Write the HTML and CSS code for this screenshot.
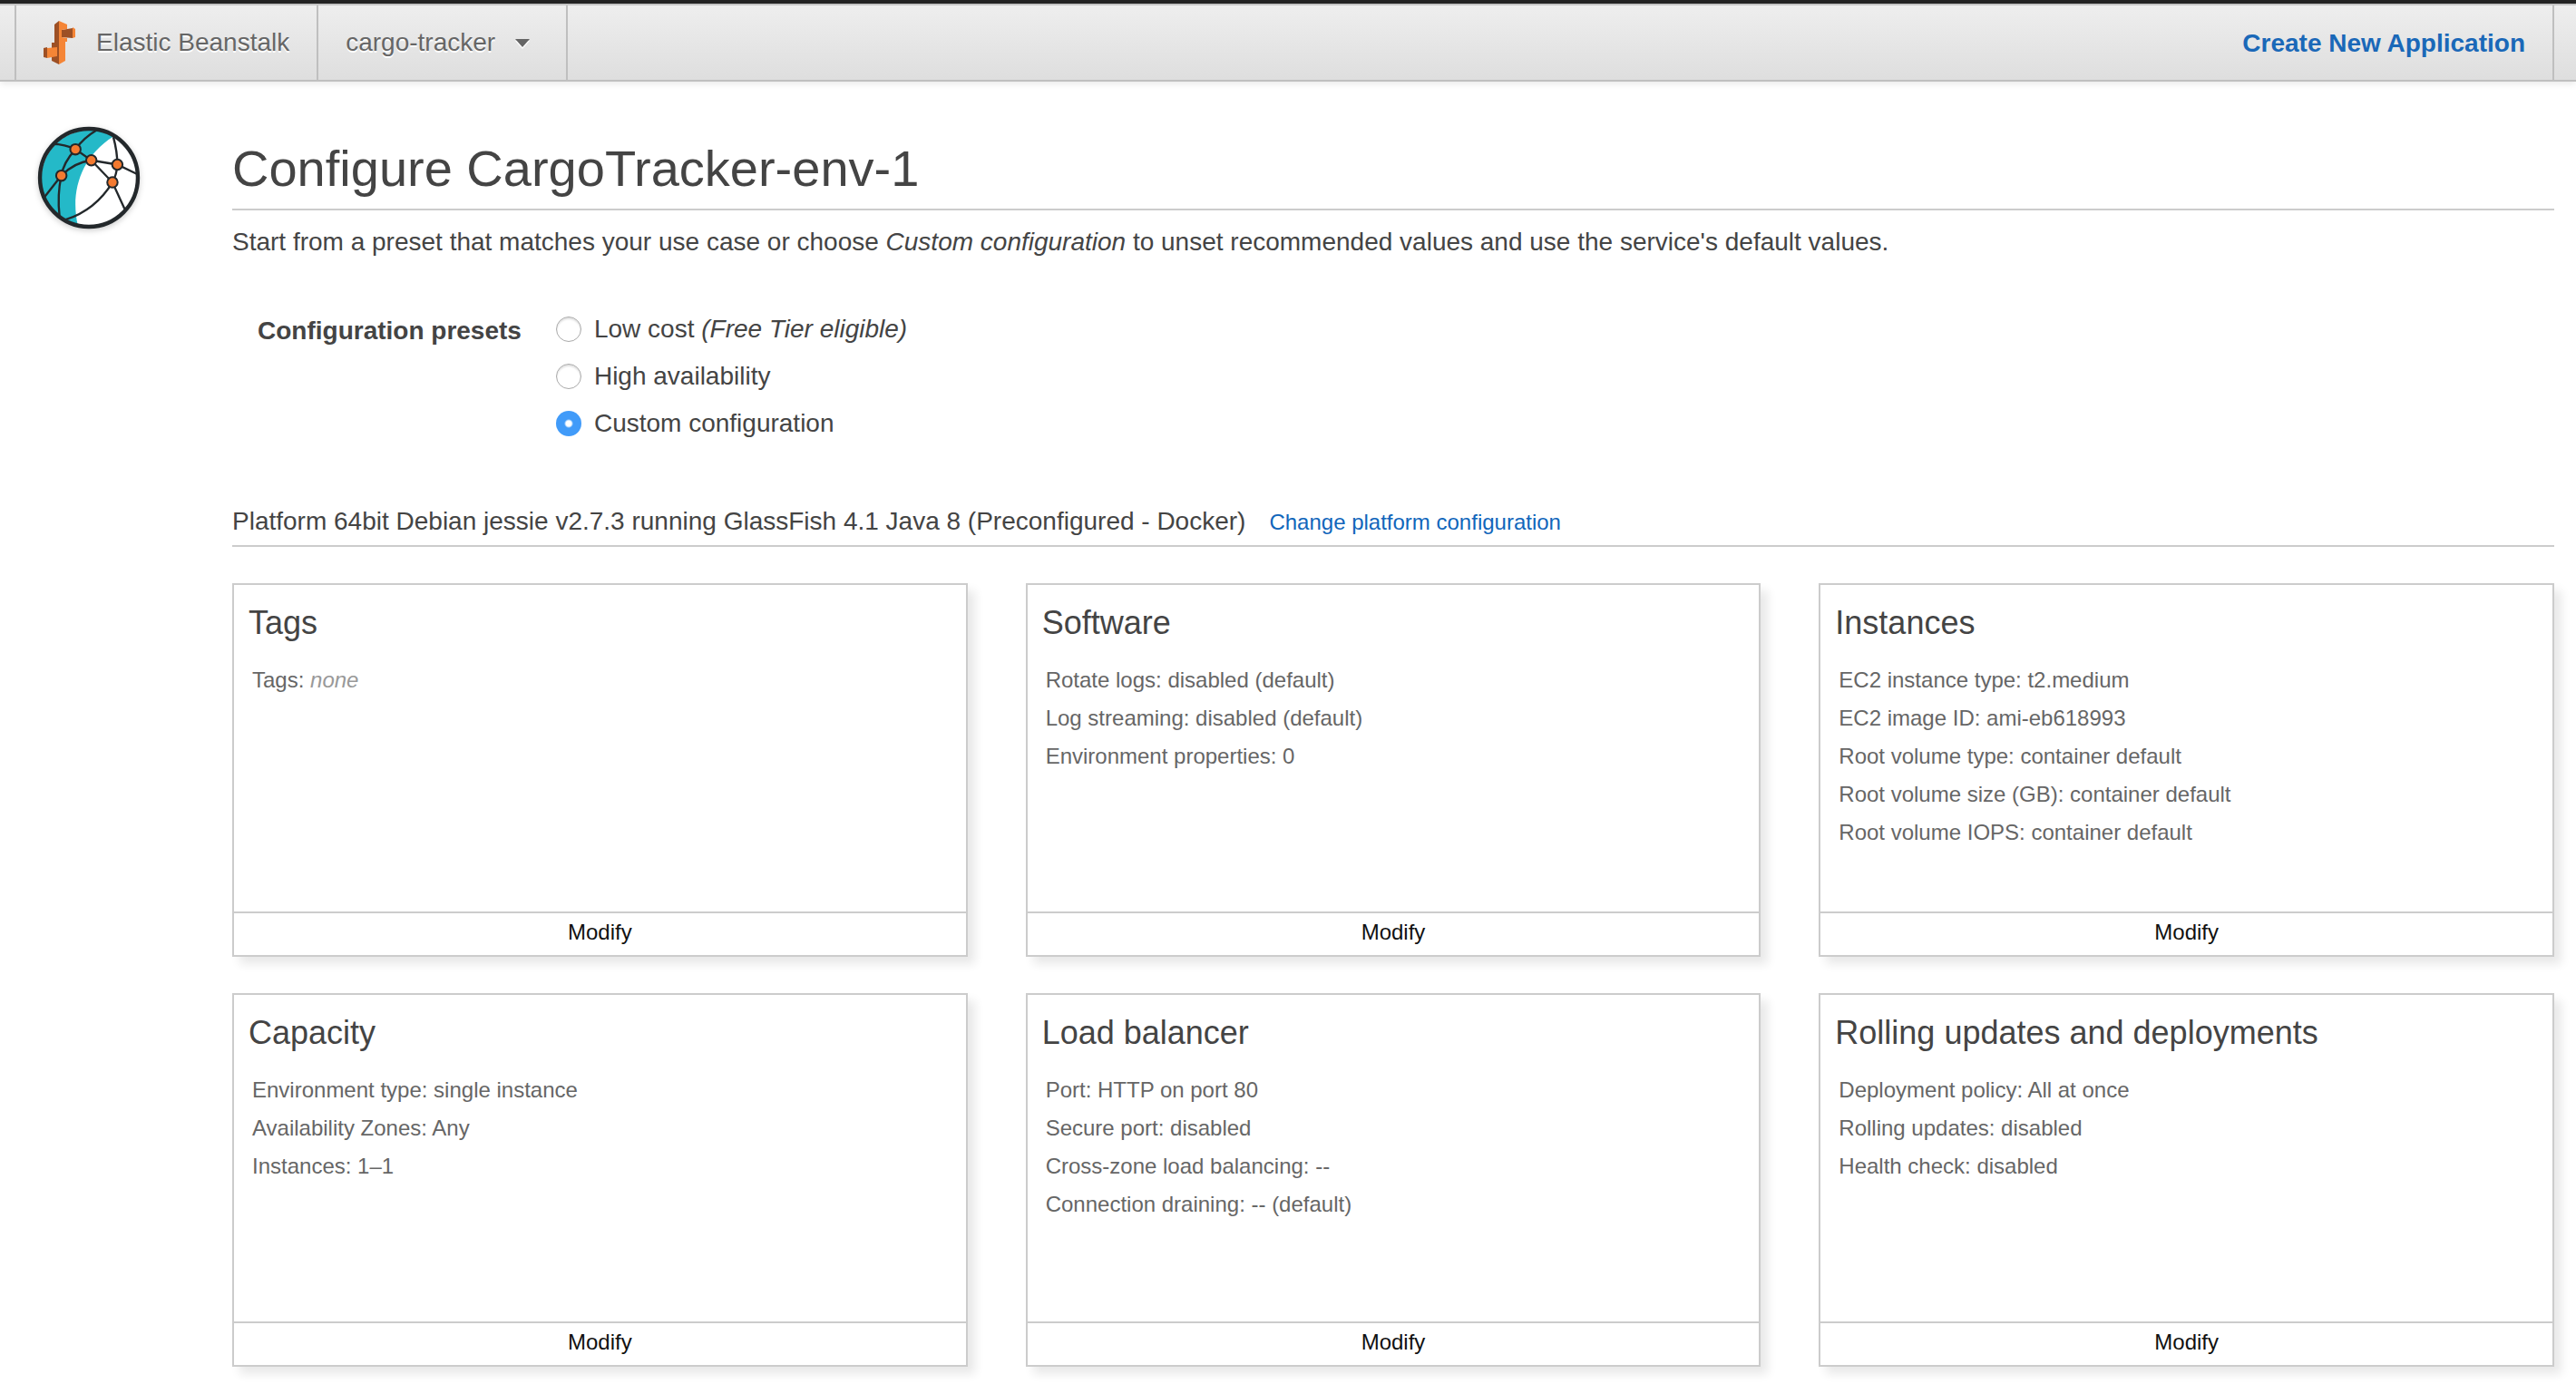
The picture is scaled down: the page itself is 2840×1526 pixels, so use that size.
FILE: index.html
```html
<!DOCTYPE html>
<html lang="en">
<head>
<meta charset="utf-8">
<title>Elastic Beanstalk - Configure CargoTracker-env-1</title>
<meta name="viewport" content="width=device-width, initial-scale=1">
<link rel="stylesheet" href="styles.css">
</head>
<body>
<header class="topbar">
  <nav class="topbar-nav">
    <a class="nav-item" href="#home">
      <svg class="service-icon" viewBox="0 0 36 48" aria-hidden="true">
        <path fill="#9d5025" d="M12 4l5-4v48l-8-4V24h3zM20 10l12-2v11l-12-1zM0 30l4-1v12l-4-1z"/>
        <path fill="#f58536" d="M17 0l9 4v5l-6 1v8l6 1v4h-2v21l-7 4zM32 7l3 2v9l-3 1zM4 30l11-1v10L4 41z"/>
      </svg>
      <span>Elastic Beanstalk</span>
    </a>
    <button class="nav-item nav-menu" type="button">cargo-tracker<span class="caret"></span></button>
  </nav>
  <a class="create-link" href="#create">Create New Application</a>
</header>

<main class="page">
  <svg class="env-icon" viewBox="36 53 344 344" aria-hidden="true">
    <circle cx="208" cy="225" r="160" fill="#fff"/>
    <path fill="#24b9c8" d="M288 90A158 158 0 1 0 172 381C148 280 176 160 288 90z"/>
    <g fill="none" stroke="#23282b" stroke-width="7">
      <path d="M88 115Q130 115 164 132L216 168L285 240L325 327"/>
      <path d="M232 70Q190 95 164 132Q125 175 118 218Q104 280 112 350"/>
      <path d="M60 292L118 218Q160 175 216 168L301 182L366 213"/>
      <path d="M288 92Q301 140 301 182Q299 215 285 240Q230 330 132 362"/>
    </g>
    <g fill="#f47a30" stroke="#23282b" stroke-width="6">
      <circle cx="164" cy="132" r="17"/><circle cx="216" cy="168" r="17"/><circle cx="301" cy="182" r="17"/><circle cx="118" cy="218" r="17"/><circle cx="285" cy="240" r="17"/>
    </g>
    <circle cx="208" cy="225" r="160" fill="none" stroke="#23282b" stroke-width="13"/>
  </svg>

  <div class="content">
    <h1 class="page-title">Configure CargoTracker-env-1</h1>
    <p class="intro">Start from a preset that matches your use case or choose <em>Custom configuration</em> to unset recommended values and use the service's default values.</p>

    <fieldset class="presets" aria-labelledby="presets-label">
      <span class="presets-label" id="presets-label">Configuration presets</span>
      <div class="preset-options">
        <label class="preset"><input type="radio" name="preset"><span>Low cost <em>(Free Tier eligible)</em></span></label>
        <label class="preset"><input type="radio" name="preset"><span>High availability</span></label>
        <label class="preset"><input type="radio" name="preset" checked><span>Custom configuration</span></label>
      </div>
    </fieldset>

    <div class="platform">
      <span>Platform 64bit Debian jessie v2.7.3 running GlassFish 4.1 Java 8 (Preconfigured - Docker)</span>
      <a class="platform-link" href="#platform">Change platform configuration</a>
    </div>

    <div class="cards">
      <section class="card">
        <h2 class="card-title">Tags</h2>
        <ul class="settings"><li>Tags: <em class="empty">none</em></li></ul>
        <button class="modify" type="button">Modify</button>
      </section>
      <section class="card">
        <h2 class="card-title">Software</h2>
        <ul class="settings">
          <li>Rotate logs: disabled (default)</li>
          <li>Log streaming: disabled (default)</li>
          <li>Environment properties: 0</li>
        </ul>
        <button class="modify" type="button">Modify</button>
      </section>
      <section class="card">
        <h2 class="card-title">Instances</h2>
        <ul class="settings">
          <li>EC2 instance type: t2.medium</li>
          <li>EC2 image ID: ami-eb618993</li>
          <li>Root volume type: container default</li>
          <li>Root volume size (GB): container default</li>
          <li>Root volume IOPS: container default</li>
        </ul>
        <button class="modify" type="button">Modify</button>
      </section>
      <section class="card">
        <h2 class="card-title">Capacity</h2>
        <ul class="settings">
          <li>Environment type: single instance</li>
          <li>Availability Zones: Any</li>
          <li>Instances: 1–1</li>
        </ul>
        <button class="modify" type="button">Modify</button>
      </section>
      <section class="card">
        <h2 class="card-title">Load balancer</h2>
        <ul class="settings">
          <li>Port: HTTP on port 80</li>
          <li>Secure port: disabled</li>
          <li>Cross-zone load balancing: --</li>
          <li>Connection draining: -- (default)</li>
        </ul>
        <button class="modify" type="button">Modify</button>
      </section>
      <section class="card">
        <h2 class="card-title">Rolling updates and deployments</h2>
        <ul class="settings">
          <li>Deployment policy: All at once</li>
          <li>Rolling updates: disabled</li>
          <li>Health check: disabled</li>
        </ul>
        <button class="modify" type="button">Modify</button>
      </section>
    </div>
  </div>
</main>
</body>
</html>
```
FILE: styles.css
```css
* {
  box-sizing: border-box;
}

body {
  margin: 0;
  background: #fff;
  color: #444;
  font-family: "Helvetica Neue", "Liberation Sans", Arial, sans-serif;
  font-size: 28px;
  line-height: 32px;
}

button {
  margin: 0;
  border: 0;
  background: none;
  font: inherit;
  cursor: pointer;
}

/* Top bar */
.topbar {
  display: flex;
  justify-content: space-between;
  height: 90px;
  padding: 0 24px 0 16px;
  border-top: 4px solid #222;
  border-bottom: 2px solid #bfbfbf;
  background: linear-gradient(#c4c4c4 2px, #eee 2px, #dedede);
  box-shadow: 0 2px 8px rgba(0, 0, 0, 0.1);
}

.topbar-nav {
  display: flex;
  margin-top: 2px;
  border-left: 2px solid #bfbfbf;
}

.nav-item {
  display: flex;
  align-items: center;
  padding: 0 30px;
  border-right: 2px solid #bfbfbf;
  color: #666;
  text-decoration: none;
  text-shadow: 0 2px 0 #fff;
}

.service-icon {
  width: 36px;
  height: 48px;
  margin-right: 22px;
}

.nav-menu {
  padding: 0 40px 0 30px;
}

.caret {
  margin-left: 22px;
  border: 8px solid transparent;
  border-top: 9px solid #666;
  border-bottom: 0;
  filter: drop-shadow(0 2px 0 #fff);
}

.create-link {
  display: flex;
  align-items: center;
  margin-top: 2px;
  padding: 2px 30px 0 0;
  border-right: 2px solid #bfbfbf;
  color: #1a68b8;
  font-weight: bold;
  text-decoration: none;
}

/* Page */
.page {
  display: flex;
  align-items: flex-start;
  gap: 100px;
  padding: 48px 24px 20px 40px;
}

.env-icon {
  flex: none;
  width: 116px;
  height: 116px;
  filter: drop-shadow(0 2px 3px rgba(0, 0, 0, 0.2));
}

.content {
  flex: 1;
  min-width: 0;
}

.page-title {
  margin: 0;
  padding: 16px 0 12px;
  border-bottom: 2px solid #ccc;
  font-size: 56px;
  line-height: 64px;
  font-weight: normal;
}

.intro {
  margin: 19px 0 0;
}

.presets {
  display: flex;
  gap: 38px;
  margin: 64px 0 0;
  padding: 0 0 0 28px;
  border: 0;
}

.presets-label {
  padding-top: 2px;
  font-weight: bold;
}

.preset-options {
  display: grid;
  gap: 20px;
}

.preset {
  display: flex;
  align-items: center;
  gap: 14px;
}

.preset input {
  appearance: none;
  width: 28px;
  height: 28px;
  margin: 0;
  border: 1px solid #aaa;
  border-radius: 50%;
  background: #fff;
  box-shadow: inset 0 2px 2px rgba(0, 0, 0, 0.12);
}

.preset input:checked {
  border: 0;
  background: radial-gradient(circle, #fff 3px, #419bf9 5px);
  box-shadow: none;
}

.platform {
  display: flex;
  align-items: baseline;
  gap: 26px;
  margin-top: 76px;
  padding-bottom: 9px;
  border-bottom: 2px solid #ccc;
}

.platform-link {
  color: #1166bb;
  font-size: 24px;
  text-decoration: none;
}

/* Cards */
.cards {
  display: grid;
  grid-template-columns: repeat(3, 1fr);
  gap: 40px 64px;
  margin-top: 40px;
}

.card {
  display: flex;
  flex-direction: column;
  min-height: 412px;
  border: 2px solid #ccc;
  background: #fff;
  box-shadow: 8px 8px 10px rgba(0, 0, 0, 0.09);
}

.card-title {
  margin: 0;
  padding: 22px 16px 0;
  font-size: 36px;
  line-height: 40px;
  font-weight: normal;
}

.settings {
  flex: 1;
  margin: 0;
  padding: 22px 20px 0;
  color: #666;
  font-size: 24px;
  line-height: 42px;
  list-style: none;
}

.empty {
  color: #999;
}

.modify {
  height: 48px;
  padding: 0 0 4px;
  border-top: 2px solid #ccc;
  color: #111;
  font-size: 24px;
  line-height: 32px;
}
```
